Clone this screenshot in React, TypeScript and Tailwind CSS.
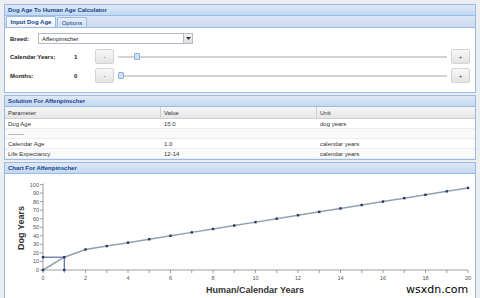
const FONT = "font-['Liberation_Sans',Arial,sans-serif]";

function PanelHeader({ title }: { title: string }) {
  return (
    <div className="h-[11px] flex items-center px-[3px] bg-gradient-to-b from-[#dfe9f6] to-[#c3d8f0] border-b border-[#99bbe8] text-[6px] font-bold text-[#15428b] leading-none">
      {title}
    </div>
  );
}

function StepButton({ label }: { label: string }) {
  return (
    <div className="w-[19px] h-[15px] flex items-center justify-center rounded-[2px] border border-[#d4d4d4] bg-gradient-to-b from-[#f8f8f8] to-[#e3e3e3] text-[6px] text-[#444] leading-none">
      {label}
    </div>
  );
}

function SliderRow({ label, value, pos }: { label: string; value: string; pos: number }) {
  return (
    <div className="flex items-center h-[15px]">
      <div className="w-[64px] text-[6px] font-bold text-[#222] leading-none">{label}</div>
      <div className="w-[21px] text-[6px] font-bold text-[#222] leading-none">{value}</div>
      <StepButton label="-" />
      <div className="relative flex-1 mx-[4px] h-[2px] bg-[#d3d3d3]">
        <div
          className="absolute top-[-3px] w-[6px] h-[7px] rounded-[1px] border border-[#8fb1df] bg-[#cfe0f6]"
          style={{ left: pos }}
        />
      </div>
      <StepButton label="+" />
    </div>
  );
}

const rows = [
  ["Dog Age", "15.0", "dog years"],
  ["--------", "", ""],
  ["Calendar Age", "1.0", "calendar years"],
  ["Life Expectancy", "12-14", "calendar years"],
];

const X0 = 43;
const Y0 = 270;
const sx = (v: number) => X0 + v * 21.25;
const sy = (v: number) => Y0 - v * 0.855;

const points: [number, number][] = [[0, 0], [1, 15], [2, 24]];
for (let n = 3; n <= 20; n++) points.push([n, 24 + (n - 2) * 4]);

function Chart() {
  return (
    <svg width="470" height="124" className="block">
      <g transform="translate(-5,-174)" fontFamily="Liberation Sans, Arial, sans-serif">
        {/* y axis ticks */}
        {Array.from({ length: 11 }, (_, i) => i * 10).map((v) => (
          <g key={v}>
            <line x1={X0 - 3} x2={X0} y1={sy(v)} y2={sy(v)} stroke="#888" strokeWidth="0.8" />
            <text x={X0 - 4} y={sy(v) + 2} fontSize="5.5" fill="#555" textAnchor="end">
              {v}
            </text>
          </g>
        ))}
        {/* x axis ticks */}
        {Array.from({ length: 21 }, (_, i) => i).map((v) => (
          <g key={v}>
            <line x1={sx(v)} x2={sx(v)} y1={Y0} y2={Y0 + 3} stroke="#888" strokeWidth="0.8" />
            {v % 2 === 0 && (
              <text x={sx(v)} y={Y0 + 10} fontSize="5.5" fill="#555" textAnchor="middle">
                {v}
              </text>
            )}
          </g>
        ))}
        <line x1={X0} x2={X0} y1={sy(100) - 1} y2={Y0} stroke="#888" strokeWidth="0.8" />
        <line x1={X0} x2={sx(20)} y1={Y0} y2={Y0} stroke="#888" strokeWidth="0.8" />
        {/* reference lines */}
        <line x1={X0} x2={sx(1)} y1={sy(15)} y2={sy(15)} stroke="#34508c" strokeWidth="1" />
        <line x1={sx(1)} x2={sx(1)} y1={sy(15)} y2={Y0} stroke="#34508c" strokeWidth="1" />
        <polyline
          points={points.map(([a, b]) => `${sx(a)},${sy(b)}`).join(" ")}
          fill="none"
          stroke="#93a0ad"
          strokeWidth="1.5"
        />
        {points.map(([a, b]) => (
          <rect key={a} x={sx(a) - 1.2} y={sy(b) - 1.2} width="2.4" height="2.4" fill="#24386a" />
        ))}
        <rect x={X0 - 1.2} y={sy(15) - 1.2} width="2.4" height="2.4" fill="#24386a" />
        <rect x={sx(1) - 1.2} y={Y0 - 1.2} width="2.4" height="2.4" fill="#24386a" />
        <text
          x="24"
          y="228"
          fontSize="9"
          fontWeight="bold"
          fill="#333"
          textAnchor="middle"
          transform="rotate(-90 24 228)"
        >
          Dog Years
        </text>
        <text x="255" y="293" fontSize="9" fontWeight="bold" fill="#333" textAnchor="middle">
          Human/Calendar Years
        </text>
      </g>
    </svg>
  );
}

export default function App() {
  return (
    <div className={`relative w-[480px] h-[298px] overflow-hidden bg-[#eceef1] pt-[4px] px-[4px] flex flex-col gap-[2px] ${FONT}`}>
      {/* Calculator panel */}
      <div className="border border-[#99bbe8] bg-white">
        <PanelHeader title="Dog Age To Human Age Calculator" />
        <div className="h-[12px] flex items-end gap-[1px] pl-[1px] bg-gradient-to-b from-[#dbe6f4] to-[#cddcf1] border-b border-[#99bbe8]">
          <div className="h-[11px] w-[50px] flex items-center justify-center bg-gradient-to-b from-white to-[#eef3fb] border border-b-0 border-[#99bbe8] rounded-t-[2px] text-[6px] font-bold text-[#15428b] leading-none">
            Input Dog Age
          </div>
          <div className="h-[10px] w-[30px] flex items-center justify-center bg-gradient-to-b from-[#e6eef9] to-[#d4e2f4] border border-b-0 border-[#99bbe8] rounded-t-[2px] text-[6px] text-[#15428b] leading-none">
            Options
          </div>
        </div>
        <div className="pt-[5px] pb-[9px] pl-[5px] pr-[5px] flex flex-col gap-[4px]">
          <div className="flex items-center h-[11px]">
            <div className="w-[28px] text-[6px] font-bold text-[#222] leading-none">Breed:</div>
            <div className="w-[155px] h-[11px] flex border border-[#b5b8c8] bg-white">
              <div className="flex-1 flex items-center pl-[3px] text-[6px] text-[#222] leading-none">
                Affenpinscher
              </div>
              <div className="w-[9px] flex items-center justify-center border-l border-[#b5b8c8] bg-gradient-to-b from-[#f3f3f3] to-[#dcdcdc]">
                <svg width="5" height="3" viewBox="0 0 5 3">
                  <path d="M0 0 L5 0 L2.5 3 Z" fill="#333" />
                </svg>
              </div>
            </div>
          </div>
          <div className="mt-[1px]">
            <SliderRow label="Calendar Years:" value="1" pos={16} />
          </div>
          <SliderRow label="Months:" value="0" pos={0} />
        </div>
      </div>

      {/* Solution panel */}
      <div className="border border-[#99bbe8] bg-white">
        <PanelHeader title="Solution For Affenpinscher" />
        <div className="grid grid-cols-[156px_156px_1fr] h-[12px] bg-gradient-to-b from-[#f7f7f7] to-[#e6e6e6] border-b border-[#d0d0d0] text-[6px] text-[#333] leading-none">
          <div className="flex items-center pl-[3px] border-r border-[#d0d0d0]">Parameter</div>
          <div className="flex items-center pl-[3px] border-r border-[#d0d0d0]">Value</div>
          <div className="flex items-center pl-[3px]">Unit</div>
        </div>
        {rows.map((r, i) => (
          <div
            key={i}
            className={`grid grid-cols-[156px_156px_1fr] h-[10px] border-b border-[#ededed] text-[6px] text-[#333] leading-none ${i % 2 === 1 ? "bg-[#fafafa]" : "bg-white"}`}
          >
            <div className="flex items-center pl-[3px]">{r[0]}</div>
            <div className="flex items-center pl-[3px]">{r[1]}</div>
            <div className="flex items-center pl-[3px]">{r[2]}</div>
          </div>
        ))}
      </div>

      {/* Chart panel */}
      <div className="flex-1 border border-[#99bbe8] bg-white">
        <PanelHeader title="Chart For Affenpinscher" />
        <Chart />
      </div>

      <div className="absolute left-[404px] top-[284px] px-[2px] bg-white text-[11px] text-black leading-none font-['DejaVu_Sans',sans-serif]">
        wsxdn.com
      </div>
    </div>
  );
}
